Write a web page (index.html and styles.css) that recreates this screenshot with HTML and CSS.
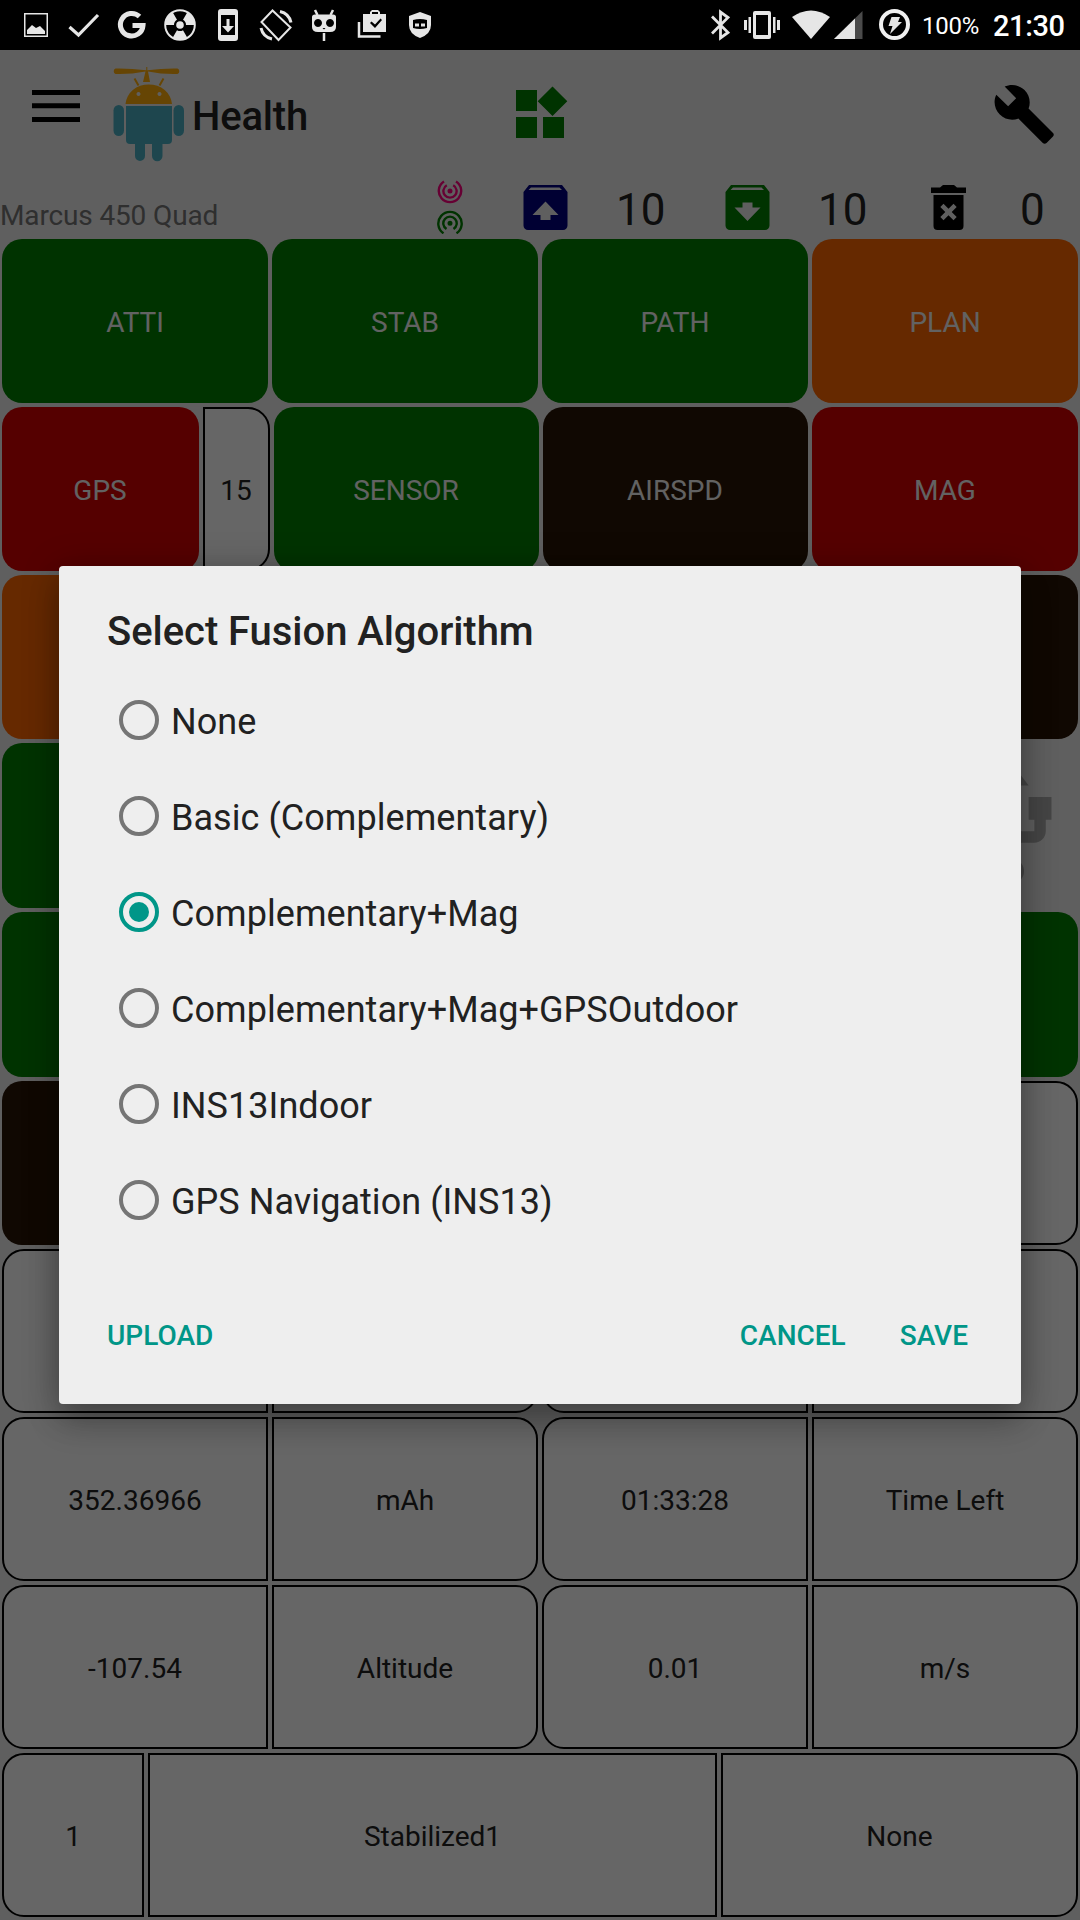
FILE: index.html
```html
<!DOCTYPE html>
<html lang="en">
<head>
<meta charset="utf-8">
<title>Health</title>
<link rel="stylesheet" href="styles.css">
</head>
<body>
<div class="screen">
  <div class="statusbar">
    <svg class="status-left" width="450" height="50" viewBox="0 0 450 50" fill="#e6e6e6">
      <path fill-rule="evenodd" d="M24 13h24v24H24zM25.500 14.500v21h21v-21z"/>
      <path d="M27 34v-4l5-5 4 3 4-2 5 5v3z"/>
      <path d="M69.500 27l9 8L98 15" fill="none" stroke="#e6e6e6" stroke-width="3.200"/>
      <path d="M139.500 16.500A11.300 11.300 0 1 0 143 25.500H132.500" fill="none" stroke="#e6e6e6" stroke-width="5"/>
      <g>
        <circle cx="180" cy="25" r="14.800" fill="none" stroke="#e6e6e6" stroke-width="2"/>
        <path d="M183 30.200L187.200 37.600A14.500 14.500 0 0 1 172.800 37.600L177 30.200A6 6 0 0 0 183 30.200zM174 25H165.500A14.500 14.500 0 0 1 172.800 12.400L177 19.800A6 6 0 0 0 174 25zM183 19.800L187.200 12.400A14.500 14.500 0 0 1 194.500 25H186A6 6 0 0 0 183 19.800z"/>
        <circle cx="180" cy="25" r="3.800"/>
      </g>
      <path fill-rule="evenodd" d="M221 9h14a3 3 0 0 1 3 3v26a3 3 0 0 1-3 3h-14a3 3 0 0 1-3-3V12a3 3 0 0 1 3-3zm0 6v20h14V15zM226.500 19h3v7h4.500l-6 6.500-6-6.500h4.500z"/>
      <g fill="none" stroke="#e6e6e6" stroke-width="2">
        <path d="M272.500 10.500L261.500 22l17 18 12-12.500z"/>
        <path d="M280 11.500q9 2 11 11M261 28q2 9 11 11" stroke-width="3"/>
      </g>
      <path fill-rule="evenodd" d="M312 17q0-2.500 3-2.500h18q3 0 3 2.500v10q0 5-6 5h-12q-6 0-6-5zM318 19a4 4 0 1 0 .01 0zM330 19a4 4 0 1 0 .01 0zM322.500 28l1.500 1.500 1.500-1.500z"/>
      <path d="M315 10l2.500 5M333 10l-2.500 5M324 33v8" fill="none" stroke="#e6e6e6" stroke-width="2.500"/>
      <path fill-rule="evenodd" d="M363 14h7v-2l2-2h6l2 2v2h6v18h-23V14zM372 14h6v-2h-6zM370 23l5 5 7-8-1.500-1.500-5.500 6-3.500-3z"/>
      <path d="M359 22v14.500h21.500" fill="none" stroke="#e6e6e6" stroke-width="2.500"/>
      <path fill-rule="evenodd" d="M420 12l11 4v9q0 9-11 13-11-4-11-13v-9zM413 20v8q7 2 14 0v-8q-7-2-14 0zM415 23.500h4v3h-4zM421 23.500h4v3h-4z"/>
    </svg>
    <svg class="status-right" width="215" height="50" viewBox="0 0 215 50" fill="#e6e6e6">
      <path d="M12 16.500l16 16-7.500 5.500V12l7.500 5.500-16 16" fill="none" stroke="#e6e6e6" stroke-width="2.800"/>
      <path fill-rule="evenodd" d="M55 11h14a2 2 0 0 1 2 2v24a2 2 0 0 1-2 2H55a2 2 0 0 1-2-2V13a2 2 0 0 1 2-2zm1 4v20h12V15zM44 20h3v10h-3zM48.500 17h2.500v16h-2.500zM73 17h2.500v16H73zM77 20h3v10h-3z"/>
      <path d="M92 17Q111 4 130 17L111 39z"/>
      <path d="M162.500 11v28H134z" fill="#4a4a4a"/><path d="M155 18.500V39h-21z"/>
      <circle cx="194.500" cy="24.500" r="13.500" fill="none" stroke="#f0f0f0" stroke-width="4"/>
      <path d="M191.500 17h8.500l-2 5h4L190 34l2.500-8h-4z"/>
    </svg>
    <span class="battery">100%</span>
    <span class="clock">21:30</span>
  </div>

  <div class="app">
    <header class="toolbar">
      <svg class="icon-menu" width="48" height="32" viewBox="0 0 48 32"><path d="M0 0h48v5H0zM0 13.300h48v5H0zM0 27h48v5H0z"/></svg>
      <svg class="logo" width="72" height="96" viewBox="0 0 72 96">
        <g fill="#ffad0a">
          <path d="M33.300 3.300V0h1v3.300Q50 1.200 64.500 1.500a3 3 0 0 1 0 5.500Q50 7.500 35 4.500L37 15h-7L32.500 4.500Q17 7.500 2.500 7a3 3 0 0 1 0-5.500Q17 1.200 33.300 3.300z"/>
          <path d="M21.500 11.500l4 7M50.500 11.500l-4 7" stroke="#ffad0a" stroke-width="2"/>
          <path fill-rule="evenodd" d="M12.500 37a23.300 21 0 0 1 46.500 0zM25.500 25a2 2 0 1 0 .01 0zM46.500 25a2 2 0 1 0 .01 0z"/>
        </g>
        <g fill="#4db0c4">
          <path d="M13 39h46v34q0 4-4 4H17q-4 0-4-4z"/>
          <rect x=".500" y="38" width="10.500" height="31" rx="5.250"/>
          <rect x="60.500" y="38" width="10.500" height="31" rx="5.250"/>
          <path d="M22 74h10v15a5 5 0 0 1-10 0zM39 74h10.500v15a5 5 0 0 1-10.500 0z"/>
        </g>
      </svg>
      <h1 class="title">Health</h1>
      <svg class="icon-widgets" width="52" height="52" viewBox="0 0 52 52" fill="#008000"><path d="M0 4h21v21H0zM0 31h21v21H0zM27 31h21v21H27zM36.500 .500L51.300 15.300 36.500 30 21.700 15.300z"/></svg>
      <svg class="icon-wrench" width="64.500" height="64.500" viewBox="0 0 24 24"><path d="M22.700 19l-9.100-9.100c.9-2.300.4-5-1.500-6.900-2-2-5-2.400-7.400-1.300L9 6 6 9 1.600 4.700C.4 7.100.9 10.100 2.900 12.100c1.900 1.900 4.600 2.400 6.900 1.500l9.100 9.100c.4.400 1 .4 1.400 0l2.300-2.300c.5-.4.5-1.100.1-1.400z"/></svg>
    </header>

    <div class="inforow">
      <span class="vehicle">Marcus 450 Quad</span>
      <svg class="icon-signal" width="26" height="54" viewBox="0 0 26 54" fill="none" stroke-width="2.400">
        <g stroke="#ff0080"><circle cx="13" cy="11" r="1.300" fill="#ff0080"/><path d="M9.800 5.300A6.600 6.600 0 1 0 16.200 5.300M7 1.500A11.200 11.200 0 1 0 19 1.500"/></g>
        <g stroke="#008000"><circle cx="13" cy="43.300" r="1.300" fill="#008000"/><path d="M9.500 49A6.700 6.700 0 1 1 16.500 49M6.500 53.300A11.700 11.700 0 1 1 19.500 53.300"/></g>
      </svg>
      <svg class="icon-box box-up" width="45" height="45" viewBox="0 0 45 45"><path fill="#000080" fill-rule="evenodd" d="M6 0h33l5.500 7v33.500a4.500 4.500 0 0 1-4.500 4.500H5a4.500 4.500 0 0 1-4.500-4.500V7zM8 2.500L5.500 5h33.500l-2.500-2.500zM22.500 16.500L9.500 30h8v5h10v-5h8z"/></svg>
      <span class="count count-up">10</span>
      <svg class="icon-box" width="45" height="45" viewBox="0 0 45 45"><path fill="#008000" fill-rule="evenodd" d="M6 0h33l5.500 7v33.500a4.500 4.500 0 0 1-4.500 4.500H5a4.500 4.500 0 0 1-4.500-4.500V7zM8 2.500L5.500 5h33.500l-2.500-2.500zM22.500 36L9.500 22.500h8v-5h10v5h8z"/></svg>
      <span class="count count-down">10</span>
      <svg class="icon-trash" width="35" height="45" viewBox="0 0 35 45"><path fill-rule="evenodd" d="M0 2.500h9L12 0h11l3 2.500h9V8H0zM2.500 10h30v31a4 4 0 0 1-4 4h-22a4 4 0 0 1-4-4zM9.300 22l5 5-5 5 3.200 3.200 5-5 5 5 3.200-3.200-5-5 5-5-3.200-3.200-5 5-5-5z"/></svg>
      <span class="count count-err">0</span>
    </div>

    <main class="grid">
      <div class="row"><div class="cell green">ATTI</div><div class="cell green">STAB</div><div class="cell green">PATH</div><div class="cell orange">PLAN</div></div>
      <div class="row row-gps"><div class="cell red">GPS</div><div class="cell value end">15</div><div class="cell green">SENSOR</div><div class="cell dark">AIRSPD</div><div class="cell red">MAG</div></div>
      <div class="row"><div class="cell orange"></div><div class="cell dark"></div><div class="cell dark"></div><div class="cell dark"></div></div>
      <div class="row"><div class="cell green"></div><div class="cell green"></div><div class="cell green"></div>
        <div class="cell plain"><svg width="137" height="137" viewBox="0 0 24 24" fill="#acacac"><path d="M15 7v4h1v2h-3V5h2l-3-4-3 4h2v8H8v-2.070c.7-.37 1.200-1.080 1.200-1.930 0-1.210-.99-2.200-2.200-2.200S4.800 7.790 4.800 9c0 .85.5 1.560 1.200 1.930V13c0 1.110.89 2 2 2h3v3.050c-.71.37-1.200 1.100-1.200 1.950a2.200 2.200 0 0 0 4.400 0c0-.85-.49-1.580-1.200-1.950V15h3c1.110 0 2-.89 2-2v-2h1V7z"/></svg></div></div>
      <div class="row"><div class="cell green"></div><div class="cell green"></div><div class="cell green"></div><div class="cell green"></div></div>
      <div class="row"><div class="cell dark"></div><div class="cell dark"></div><div class="cell value start"></div><div class="cell value end"></div></div>
      <div class="row"><div class="cell value start"></div><div class="cell value end"></div><div class="cell value start"></div><div class="cell value end"></div></div>
      <div class="row"><div class="cell value start">352.36966</div><div class="cell value end">mAh</div><div class="cell value start">01:33:28</div><div class="cell value end">Time Left</div></div>
      <div class="row"><div class="cell value start">-107.54</div><div class="cell value end">Altitude</div><div class="cell value start">0.01</div><div class="cell value end">m/s</div></div>
      <div class="row row-mode"><div class="cell value start">1</div><div class="cell value">Stabilized1</div><div class="cell value end">None</div></div>
    </main>
  </div>

  <div class="scrim">
    <section class="dialog" role="dialog">
      <h2 class="dialog-title">Select Fusion Algorithm</h2>
      <ul class="options">
        <li class="option"><i class="radio"></i><span class="label">None</span></li>
        <li class="option"><i class="radio"></i><span class="label">Basic (Complementary)</span></li>
        <li class="option"><i class="radio checked"></i><span class="label">Complementary+Mag</span></li>
        <li class="option"><i class="radio"></i><span class="label">Complementary+Mag+GPSOutdoor</span></li>
        <li class="option"><i class="radio"></i><span class="label">INS13Indoor</span></li>
        <li class="option"><i class="radio"></i><span class="label">GPS Navigation (INS13)</span></li>
      </ul>
      <div class="actions"><span class="action">UPLOAD</span><span class="action cancel">CANCEL</span><span class="action">SAVE</span></div>
    </section>
  </div>
</div>
</body>
</html>
```
FILE: styles.css
```css
* { box-sizing: border-box; }
body { margin: 0; font-family: Roboto, sans-serif; }
.screen { position: relative; width: 1080px; height: 1920px; overflow: hidden; background: #eee; display: flex; flex-direction: column; }
svg { display: block; flex: none; }

.statusbar { height: 50px; flex: none; background: #000; color: #fff; display: flex; align-items: center; }
.status-right { margin-left: 250px; }
.battery { font-size: 24px; letter-spacing: -.2px; padding-top: 2px; margin-left: 7px; width: 71px; white-space: nowrap; }
.clock { font-size: 29px; font-weight: 500; letter-spacing: -.4px; padding-top: 2px; white-space: nowrap; }

.app { flex: 1; display: flex; flex-direction: column; color: #212121; }
.toolbar { height: 116px; flex: none; display: flex; align-items: flex-start; }
.icon-menu { margin: 40px 0 0 32px; }
.logo { margin: 17px 0 0 33px; }
.title { margin: 43px 0 0 7px; width: 324px; font-size: 40px; line-height: 48px; font-weight: 500; letter-spacing: -.2px; }
.icon-widgets { margin-top: 36px; }
.icon-wrench { margin: 32px 0 0 424px; }

.inforow { height: 71px; flex: none; display: flex; align-items: flex-start; }
.vehicle { width: 437px; margin-top: 33px; font-size: 28px; line-height: 34px; letter-spacing: -.14px; color: #757575; }
.icon-signal { margin-top: 14px; }
.icon-box { margin-top: 19px; }
.box-up { margin-left: 60px; }
.count { margin-top: 16px; font-size: 44px; line-height: 56px; }
.count-up { margin-left: 48px; width: 109px; }
.count-down { margin-left: 48px; width: 113px; }
.icon-trash { margin-top: 19px; }
.count-err { margin-left: 54px; }

.grid { display: grid; grid-template-rows: 168px 168px 168px 169px 169px repeat(5, 168px); }
.row { display: grid; grid-template-columns: repeat(4, 270px); }
.row-gps { grid-template-columns: 201px 71px 269px 269px 270px; }
.row-mode { grid-template-columns: 146px 573px 361px; }
.cell { margin: 2px; padding-top: 2px; display: flex; align-items: center; justify-content: center; font-size: 28px; border-radius: 20px; color: #f4f4f4; }
.green { background: #008000; }
.orange { background: #ff6600; }
.red { background: #d40000; }
.dark { background: #281405; }
.plain { margin: 0; padding: 0; justify-content: flex-end; }
.value { background: #fff; border: 2px solid #000; border-radius: 0; color: #212121; }
.start { border-radius: 22px 0 0 22px; }
.end { border-radius: 0 22px 22px 0; }
.row-gps .cell { padding-right: 1px; }
.row-gps .cell:last-child { padding-right: 0; }

.scrim { position: absolute; left: 0; right: 0; top: 50px; bottom: 0; background: rgba(0, 0, 0, .6); display: flex; justify-content: center; align-items: flex-start; padding-top: 516px; }
.dialog { width: 962px; height: 838px; border-radius: 4px; background: #eee; box-shadow: 0 20px 32px rgba(0, 0, 0, .2), 0 4px 36px rgba(0, 0, 0, .26); color: #212121; padding: 41px 48px 36px; display: flex; flex-direction: column; }
.dialog-title { margin: 0; font-size: 40px; line-height: 50px; font-weight: 500; letter-spacing: -.05px; }
.options { list-style: none; margin: 15px 0 0; padding: 0; }
.option { height: 96px; display: flex; align-items: center; font-size: 36px; }
.label { padding-top: 4px; letter-spacing: .05px; }
.radio { width: 40px; height: 40px; margin: 0 12px; border: 4px solid #757575; border-radius: 50%; display: flex; align-items: center; justify-content: center; }
.checked { border-color: #009688; }
.checked::after { content: ""; width: 20px; height: 20px; border-radius: 50%; background: #009688; }
.actions { margin-top: auto; height: 66px; display: flex; align-items: center; font-size: 28px; font-weight: 500; color: #009688; }
.cancel { margin-left: auto; margin-right: 54px; }
.action:last-child { margin-right: 5px; }
```
